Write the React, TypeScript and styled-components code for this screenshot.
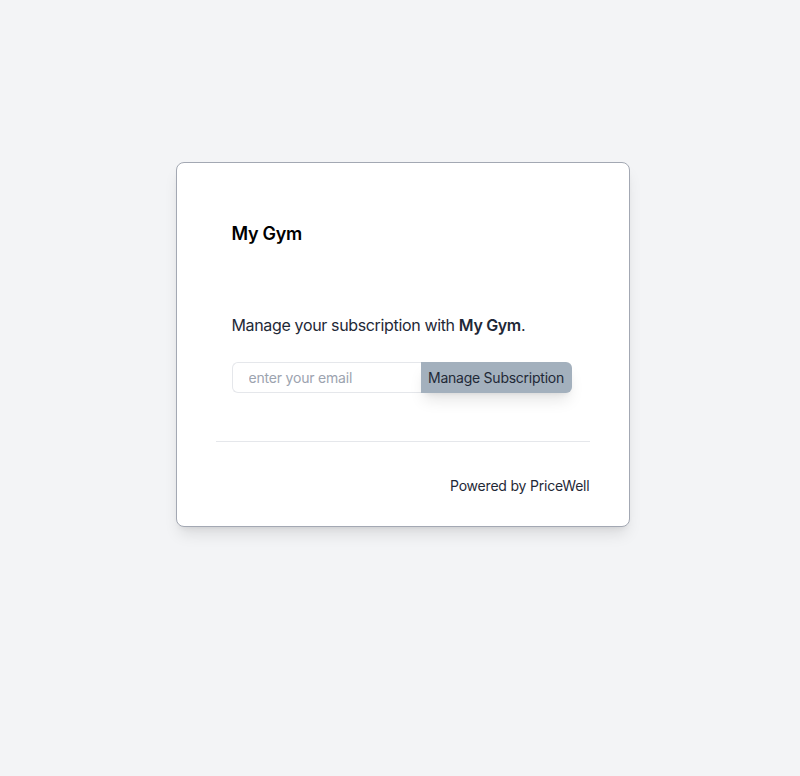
import React from "react";
import styled, { createGlobalStyle } from "styled-components";

const Global = createGlobalStyle`
  html, body { margin: 0; padding: 0; background: #f3f4f6; }
  body { font-family: Inter, "Noto Sans", sans-serif; -webkit-font-smoothing: antialiased; }
  * { box-sizing: border-box; }
`;

const Page = styled.div`
  min-height: 776px;
  display: flex;
  justify-content: center;
  align-items: flex-start;
  padding: 162px 0 0 5px;
`;

const Card = styled.div`
  width: 454px;
  background: #ffffff;
  border: 1px solid #a3a8b3;
  border-radius: 8px;
  box-shadow: 0 10px 15px -3px rgba(0, 0, 0, 0.1), 0 4px 6px -4px rgba(0, 0, 0, 0.1);
  padding: 0 39px;
`;

const Body = styled.div`
  padding: 57px 16px 48px;
`;

const Title = styled.h1`
  margin: 0;
  font-size: 18px;
  line-height: 28px;
  font-weight: 600;
  letter-spacing: -0.3px;
  color: #000;
`;

const Lead = styled.p`
  margin: 65px 0 0;
  font-size: 16px;
  line-height: 24px;
  letter-spacing: -0.35px;
  color: #1f2937;
  b { font-weight: 600; }
`;

const Form = styled.form`
  margin-top: 25px;
  display: flex;
  width: 340px;
  height: 31px;
`;

const Input = styled.input`
  flex: 1;
  min-width: 0;
  height: 100%;
  border: 1px solid #e5e7eb;
  border-right: none;
  border-radius: 6px 0 0 6px;
  padding: 0 16px;
  font-family: inherit;
  font-size: 14px;
  letter-spacing: -0.2px;
  color: #111827;
  background: #fff;
  outline: none;
  &::placeholder { color: #9ca3af; }
`;

const Button = styled.button`
  width: 151px;
  height: 100%;
  border: none;
  border-radius: 0 6px 6px 0;
  background: #a3b0bd;
  color: #1f2937;
  font-family: inherit;
  font-size: 14px;
  letter-spacing: -0.25px;
  padding: 0;
  cursor: pointer;
  box-shadow: 0 10px 15px -3px rgba(0, 0, 0, 0.1), 0 4px 6px -4px rgba(0, 0, 0, 0.1);
`;

const Divider = styled.hr`
  margin: 0;
  border: none;
  border-top: 1px solid #e5e7eb;
`;

const Footer = styled.div`
  padding: 34px 0 30px;
  text-align: right;
  font-size: 14px;
  line-height: 20px;
  letter-spacing: -0.2px;
  color: #1f2937;
`;

export default function App() {
  return (
    <>
      <Global />
      <Page>
        <Card>
          <Body>
            <Title>My Gym</Title>
            <Lead>
              Manage your subscription with <b>My Gym</b>.
            </Lead>
            <Form onSubmit={(e) => e.preventDefault()}>
              <Input type="email" placeholder="enter your email" />
              <Button type="submit">Manage Subscription</Button>
            </Form>
          </Body>
          <Divider />
          <Footer>Powered by PriceWell</Footer>
        </Card>
      </Page>
    </>
  );
}
